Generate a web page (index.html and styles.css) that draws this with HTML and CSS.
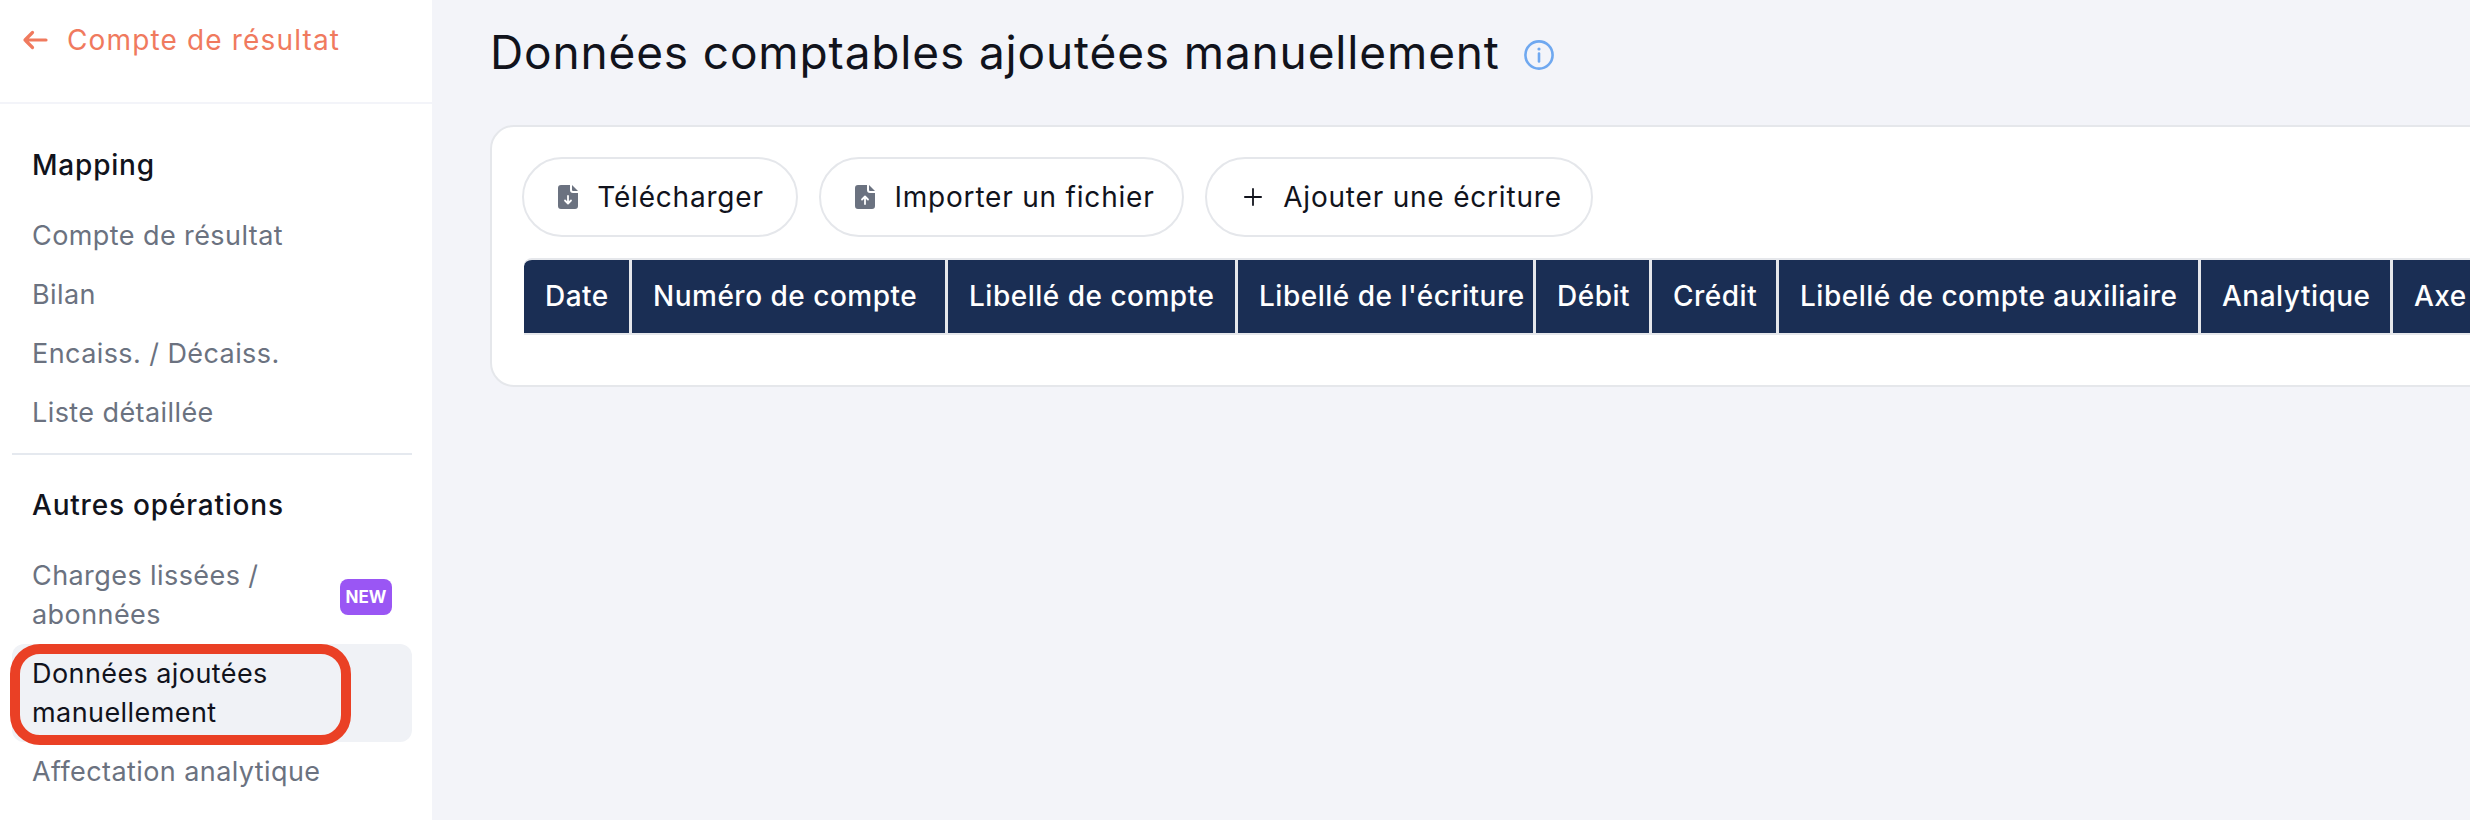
FILE: index.html
```html
<!DOCTYPE html>
<html lang="fr">
<head>
<meta charset="utf-8">
<title>Données comptables ajoutées manuellement</title>
<link rel="stylesheet" href="styles.css">
</head>
<body>
<div class="app">
  <aside class="sidebar">
    <a class="back">
      <svg class="back-icon" viewBox="0 0 26 22" fill="none"><path d="M24 11H3M10.5 3.5L3 11l7.5 7.5" stroke="currentColor" stroke-width="3.2" stroke-linecap="round" stroke-linejoin="round"/></svg>
      <span>Compte de résultat</span>
    </a>
    <nav class="nav">
      <h3 class="nav-title">Mapping</h3>
      <a class="nav-item">Compte de résultat</a>
      <a class="nav-item">Bilan</a>
      <a class="nav-item">Encaiss. / Décaiss.</a>
      <a class="nav-item">Liste détaillée</a>
      <hr class="nav-sep">
      <h3 class="nav-title">Autres opérations</h3>
      <a class="nav-item nav-item-badge"><span class="nav-label">Charges lissées / abonnées</span><span class="badge">NEW</span></a>
      <a class="nav-item active"><span class="nav-label">Données ajoutées manuellement</span><span class="highlight"></span></a>
      <a class="nav-item">Affectation analytique</a>
    </nav>
  </aside>
  <main class="main">
    <header class="page-head">
      <h1 class="page-title">Données comptables ajoutées manuellement</h1>
      <svg class="info" viewBox="0 0 30 30" fill="none"><circle cx="15" cy="15" r="13.6" stroke="#6fa8f0" stroke-width="2.6"/><path d="M15 13.5v8" stroke="#6fa8f0" stroke-width="2.6" stroke-linecap="round"/><circle cx="15" cy="9" r="1.6" fill="#6fa8f0"/></svg>
    </header>
    <section class="card">
      <div class="toolbar">
        <button class="btn btn-first"><svg class="file" viewBox="0 0 20 24"><path d="M3 0h9v5a3 3 0 0 0 3 3h5v13a3 3 0 0 1-3 3H3a3 3 0 0 1-3-3V3a3 3 0 0 1 3-3z" fill="#6b7280"/><path d="M14 0l6 6h-5a1 1 0 0 1-1-1z" fill="#6b7280"/><path d="M10 11v7M7 15.5l3 3 3-3" stroke="#fff" stroke-width="1.8" fill="none" stroke-linecap="round" stroke-linejoin="round"/></svg>Télécharger</button>
        <button class="btn btn-second"><svg class="file" viewBox="0 0 20 24"><path d="M3 0h9v5a3 3 0 0 0 3 3h5v13a3 3 0 0 1-3 3H3a3 3 0 0 1-3-3V3a3 3 0 0 1 3-3z" fill="#6b7280"/><path d="M14 0l6 6h-5a1 1 0 0 1-1-1z" fill="#6b7280"/><path d="M10 19v-7M7 14.5l3-3 3 3" stroke="#fff" stroke-width="1.8" fill="none" stroke-linecap="round" stroke-linejoin="round"/></svg>Importer un fichier</button>
        <button class="btn btn-third"><svg class="plus" viewBox="0 0 20 20"><path d="M10 1v18M1 10h18" stroke="#11131c" stroke-width="2" stroke-linecap="round"/></svg>Ajouter une écriture</button>
      </div>
      <div class="table-head">
        <div class="th">Date</div>
        <div class="th">Numéro de compte</div>
        <div class="th">Libellé de compte</div>
        <div class="th">Libellé de l'écriture</div>
        <div class="th">Débit</div>
        <div class="th">Crédit</div>
        <div class="th">Libellé de compte auxiliaire</div>
        <div class="th">Analytique</div>
        <div class="th">Axe</div>
      </div>
    </section>
  </main>
</div>
</body>
</html>
```

FILE: styles.css
```css
* { box-sizing: border-box; }
html, body { margin: 0; height: 100%; overflow: hidden; }
body {
  font-family: "Inter", "Liberation Sans", sans-serif;
  background: #f3f4f9;
  color: #11131c;
}
.app { display: flex; height: 820px; width: 2470px; overflow: hidden; }

.sidebar { width: 432px; flex: none; background: #fff; }
.back {
  display: flex;
  align-items: center;
  gap: 19px;
  height: 104px;
  padding: 0 0 22px 22px;
  border-bottom: 2px solid #f3f4f9;
  color: #f07a5e;
  font-size: 28px;
  letter-spacing: 1.15px;
}
.back-icon { width: 26px; height: 22px; flex: none; }
.nav { padding: 0 20px 0 12px; }
.nav-title {
  margin: 0;
  padding: 43px 20px 0;
  font-size: 28px;
  line-height: 36px;
  font-weight: 500;
  letter-spacing: 0.8px;
  color: #11131c;
}
.nav-sep + .nav-title { padding-top: 32px; }
.nav-title + .nav-item { margin-top: 23px; }
.nav-item {
  position: relative;
  display: flex;
  align-items: center;
  justify-content: space-between;
  min-height: 59px;
  padding: 10px 20px;
  font-size: 27px;
  letter-spacing: 0.42px;
  line-height: 39px;
  color: #6b7280;
  border-radius: 12px;
}
.nav-label { width: 290px; }
.nav-item-badge { padding-right: 20px; min-height: 98px; }
.active { color: #11131c; background: #f0f2f6; }
.highlight {
  position: absolute;
  left: -2px;
  top: 0;
  width: 341px;
  height: 101px;
  border: 10px solid #ea4025;
  border-radius: 30px;
}
.badge {
  flex: none;
  width: 52px;
  height: 36px;
  margin-top: 3px;
  background: #9a56f4;
  color: #fff;
  border-radius: 8px;
  font-size: 17px;
  font-weight: 700;
  letter-spacing: 0;
  line-height: 36px;
  text-align: center;
}
.nav-sep { margin: 11px 0 0; border: 0; border-top: 2px solid #e5e9ef; }

.main { flex: 1; min-width: 0; padding: 0 0 0 58px; }
.page-head { display: flex; align-items: center; height: 104px; gap: 24px; margin-bottom: 21px; }
.page-title { margin: 0; font-size: 46px; font-weight: 400; letter-spacing: 0.85px; white-space: nowrap; }
.info { width: 30px; height: 30px; flex: none; margin-top: 6px; }

.card {
  width: 2100px;
  height: 262px;
  background: #fff;
  border: 2px solid #e5e7eb;
  border-radius: 24px;
  padding: 30px 30px 30px 32px;
  overflow: hidden;
}
.toolbar { display: flex; gap: 21px; margin-left: -2px; }
.btn {
  display: flex;
  align-items: center;
  height: 80px;
  background: #fff;
  border: 2px solid #e5e7eb;
  border-radius: 40px;
  font: inherit;
  font-size: 28px;
  letter-spacing: 0.8px;
  color: #11131c;
  white-space: nowrap;
  justify-content: center;
}
.btn-first { width: 276px; gap: 19px; padding-left: 8px; }
.btn-second { width: 365px; gap: 19px; padding-left: 13px; }
.btn-third { width: 388px; gap: 21px; padding-left: 14px; }
.file { width: 20px; height: 24px; flex: none; }
.plus { width: 18px; height: 18px; flex: none; }

.table-head {
  display: grid;
  grid-template-columns: 108px 316px 290px 298px 116px 127px 422px 192px 200px;
  margin-top: 21px;
  width: 2068px;
  height: 77px;
  border: solid #e5e7eb;
  border-width: 2px 0;
  border-top-left-radius: 8px;
  background: #1a2e54;
}
.th {
  display: flex;
  align-items: center;
  padding: 0 0 2px 21px;
  color: #fff;
  font-size: 28px;
  font-weight: 500;
  letter-spacing: 0.5px;
  white-space: nowrap;
  border-right: 3px solid #e5e7eb;
}
```
